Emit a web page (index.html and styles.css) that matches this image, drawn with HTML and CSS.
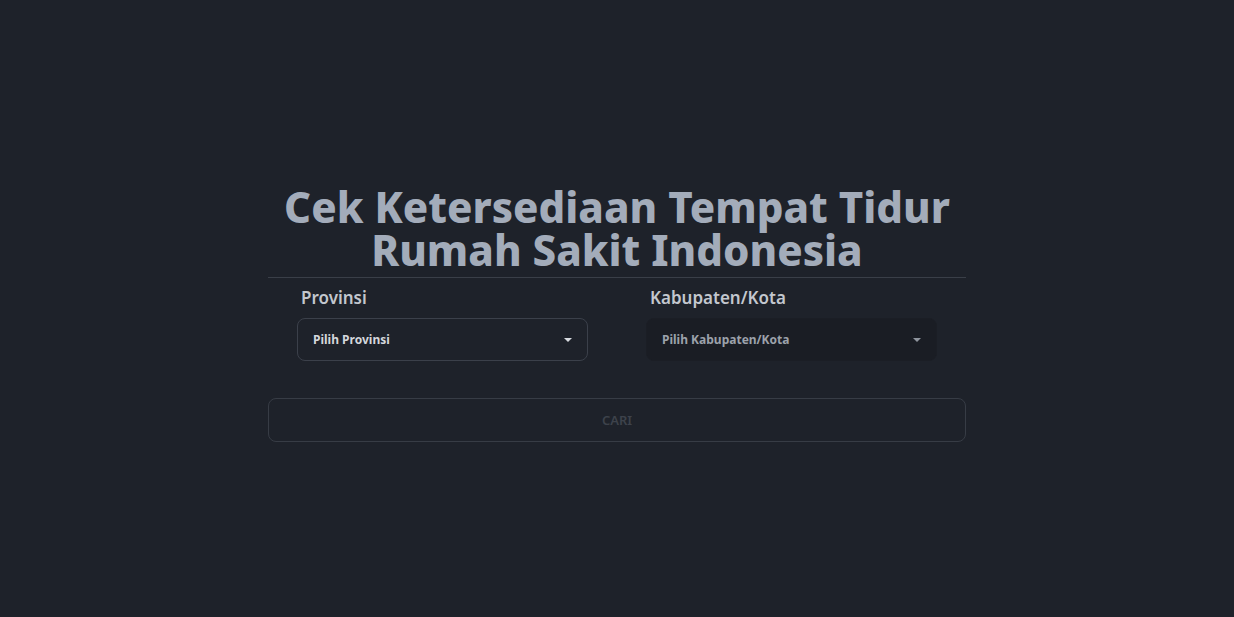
FILE: index.html
```html
<!DOCTYPE html>
<html lang="id">
<head>
<meta charset="utf-8">
<title>Cek Ketersediaan Tempat Tidur</title>
<link rel="stylesheet" href="styles.css">
</head>
<body>
<main class="page">
  <section class="panel">
    <h1 class="title">Cek Ketersediaan Tempat Tidur<br>Rumah Sakit Indonesia</h1>
    <hr class="divider">
    <div class="fields">
      <div class="field">
        <label class="field-label">Provinsi</label>
        <div class="select">
          <span class="select-text">Pilih Provinsi</span>
          <svg class="caret" width="8" height="4" viewBox="0 0 8 4"><path d="M0 0h8L4 4z" fill="currentColor"/></svg>
        </div>
      </div>
      <div class="field">
        <label class="field-label">Kabupaten/Kota</label>
        <div class="select is-disabled">
          <span class="select-text">Pilih Kabupaten/Kota</span>
          <svg class="caret" width="8" height="4" viewBox="0 0 8 4"><path d="M0 0h8L4 4z" fill="currentColor"/></svg>
        </div>
      </div>
    </div>
    <button class="search" disabled>CARI</button>
  </section>
</main>
</body>
</html>
```
FILE: styles.css
```css
html, body {
  margin: 0;
  padding: 0;
  background: #1e222a;
  font-family: "Noto Sans", "Open Sans", sans-serif;
}

.page {
  min-height: 100vh;
  display: flex;
  align-items: center;
  justify-content: center;
}

.panel {
  width: 698px;
  margin-top: 10px;
}

.title {
  margin: 0;
  text-align: center;
  font-size: 42px;
  line-height: 43px;
  font-weight: 800;
  color: #a3acba;
  letter-spacing: 0;
}

.divider {
  border: 0;
  border-top: 1px solid #3a3f48;
  margin: 6px 0 0;
}

.fields {
  display: grid;
  grid-template-columns: 1fr 1fr;
}

.field {
  padding: 0 29px;
  display: flex;
  flex-direction: column;
}

.field-label {
  display: block;
  margin: 9px 0 0 4px;
  font-size: 17px;
  line-height: 22px;
  font-weight: 600;
  color: #c3c7ce;
}

.select {
  margin-top: 9px;
  height: 43px;
  box-sizing: border-box;
  border: 1px solid #3b404a;
  border-radius: 8px;
  display: flex;
  align-items: center;
  justify-content: space-between;
  padding: 0 15px 0 15px;
  color: #d4d7dc;
}

.select-text {
  font-size: 12px;
  font-weight: 700;
}

.caret {
  color: #d8dbe0;
}

.select.is-disabled {
  border-color: #1b1e25;
  background: #1a1d24;
  color: #9ca2ab;
}

.select.is-disabled .caret {
  color: #8f959e;
}

.search {
  display: block;
  width: 100%;
  margin-top: 37px;
  height: 44px;
  box-sizing: border-box;
  background: transparent;
  border: 1px solid #373c45;
  border-radius: 8px;
  font-family: "Noto Sans", sans-serif;
  font-size: 13px;
  font-weight: 600;
  color: #3d424b;
}
```
